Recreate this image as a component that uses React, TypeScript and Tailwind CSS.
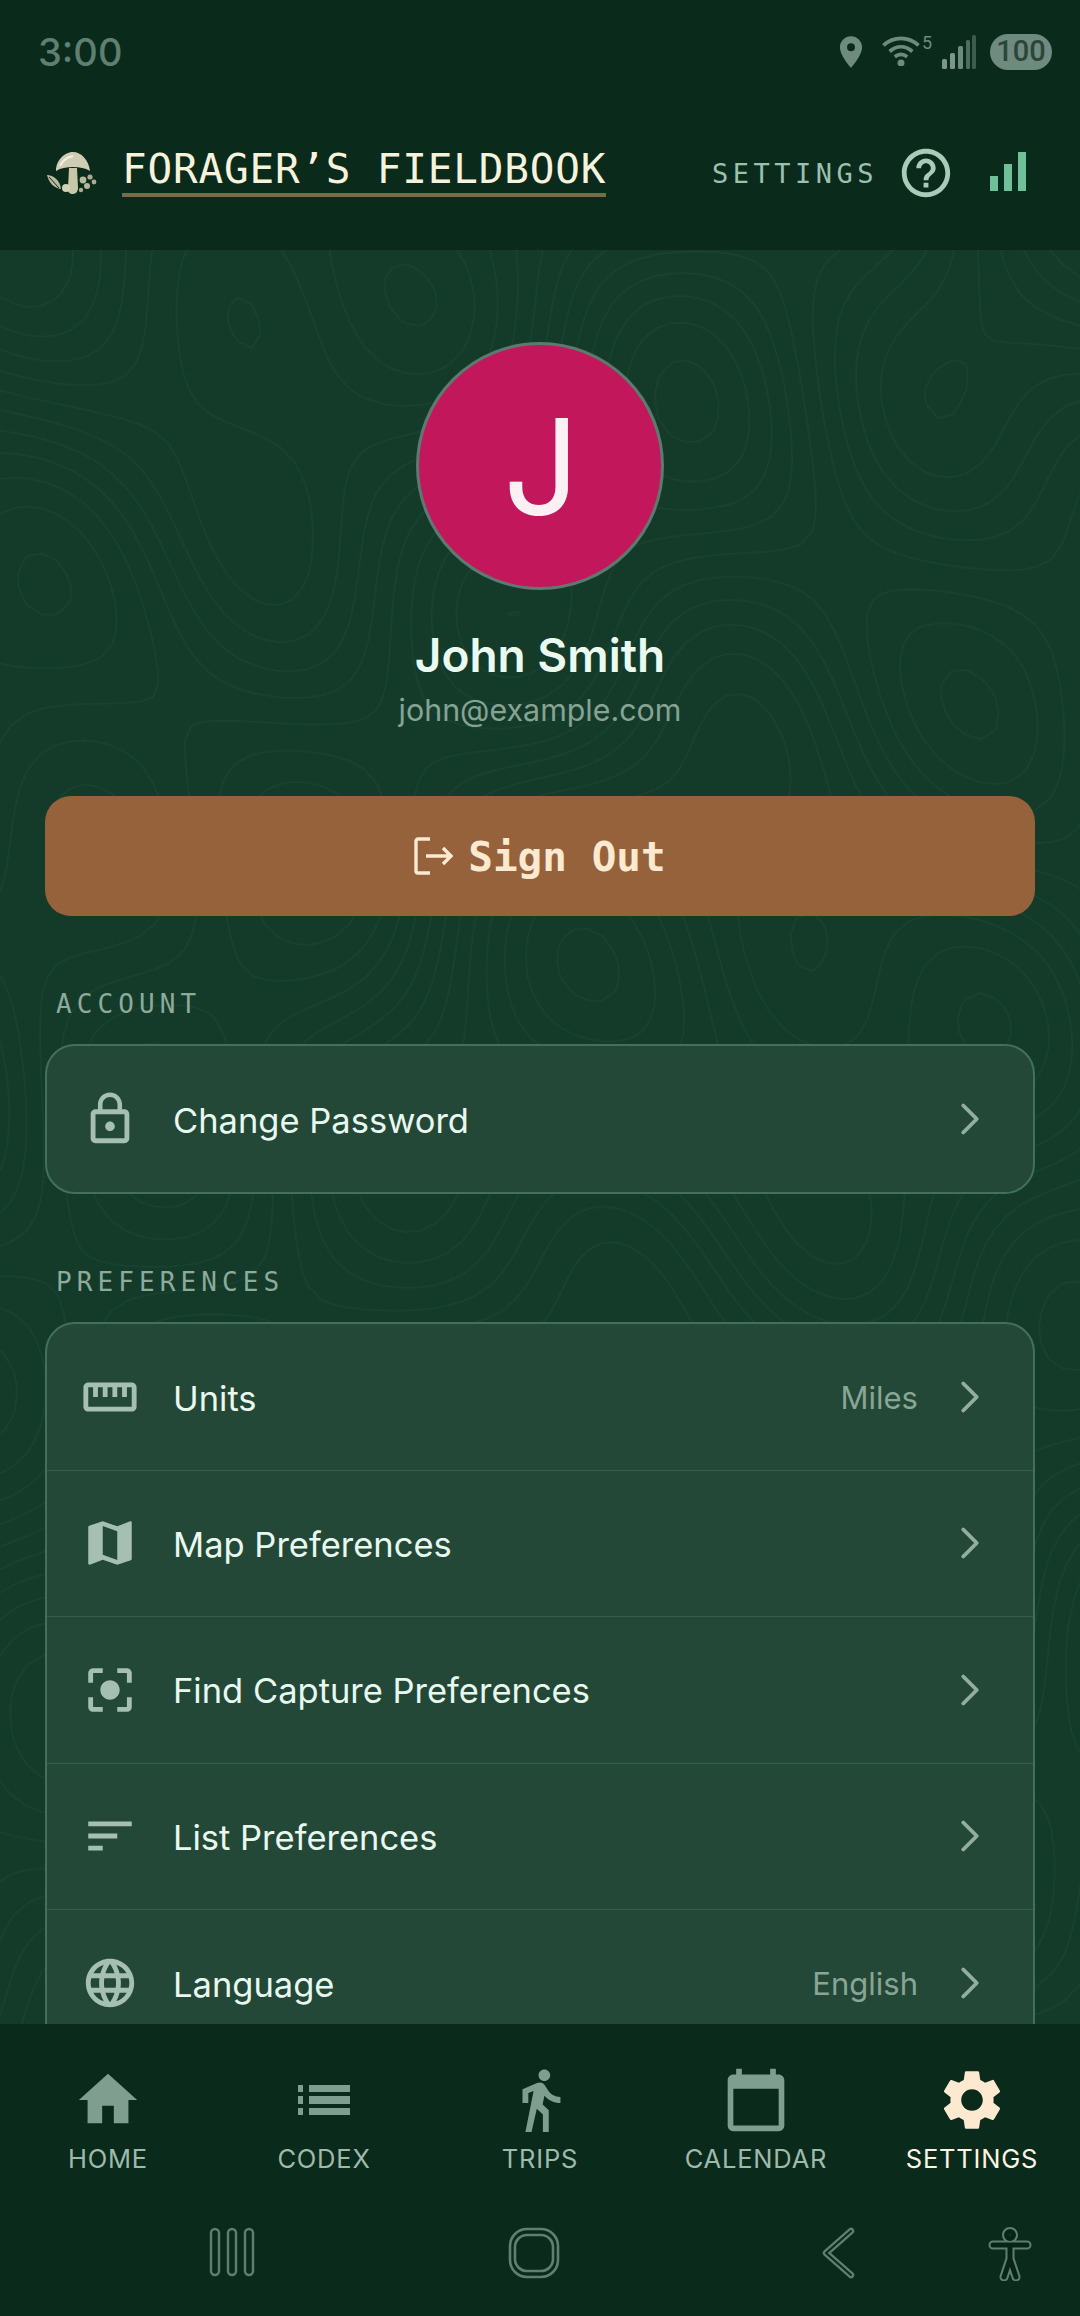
import type { ReactNode } from "react";
import { ChevronRight } from "lucide-react";
import {
  MdCalendarToday,
  MdCenterFocusStrong,
  MdDirectionsWalk,
  MdHelpOutline,
  MdHome,
  MdLanguage,
  MdLocationOn,
  MdLockOutline,
  MdMap,
  MdSettings,
  MdSort,
  MdStraighten,
} from "react-icons/md";

const INTER = "font-['Inter',sans-serif]";
const MONO = "font-['DejaVu_Sans_Mono',monospace]";

// height field for the faint topo lines behind the page
function height(x: number, y: number) {
  return (
    Math.sin(x / 170 + 0.6) * Math.cos(y / 210 - 0.4) +
    0.55 * Math.sin(x / 83 + y / 120 + 1.7) +
    0.35 * Math.cos(x / 61 - y / 74) +
    0.5 * Math.sin(y / 140 + 2.1)
  );
}

// marching squares, one long path per level
function contourPaths(w: number, h: number, cell: number) {
  const out: string[] = [];
  for (let level = -2; level <= 2; level += 0.26) {
    let d = "";
    for (let y = 0; y < h; y += cell) {
      for (let x = 0; x < w; x += cell) {
        const a = height(x, y) - level;
        const b = height(x + cell, y) - level;
        const c = height(x + cell, y + cell) - level;
        const e = height(x, y + cell) - level;
        const pts: string[] = [];
        if (a > 0 !== b > 0) pts.push(`${(x + (cell * a) / (a - b)).toFixed(1)} ${y}`);
        if (b > 0 !== c > 0) pts.push(`${x + cell} ${(y + (cell * b) / (b - c)).toFixed(1)}`);
        if (e > 0 !== c > 0) pts.push(`${(x + (cell * e) / (e - c)).toFixed(1)} ${y + cell}`);
        if (a > 0 !== e > 0) pts.push(`${x} ${(y + (cell * a) / (a - e)).toFixed(1)}`);
        if (pts.length >= 2) d += `M${pts[0]}L${pts[1]}`;
      }
    }
    out.push(d);
  }
  return out;
}

const contours = contourPaths(1080, 1774, 14);

function SectionLabel({ children }: { children: ReactNode }) {
  return (
    <div className={`${MONO} pl-[11px] text-[26px] leading-[32px] tracking-[5.1px] text-[#8daa9b]`}>{children}</div>
  );
}

function Row({ icon, label, value, last }: { icon: ReactNode; label: string; value?: string; last?: boolean }) {
  return (
    <div className={`flex h-[146.4px] shrink-0 items-center ${last ? "" : "border-b border-[#365f4d]"}`}>
      <div className="flex w-[126px] shrink-0 justify-center text-[#a5c0b2]">{icon}</div>
      <span className={`${INTER} flex-1 pt-[3px] text-[34.5px] text-[#e9f8ef]`}>{label}</span>
      {value && <span className={`${INTER} mr-[25px] pt-[3px] text-[31px] text-[#88a596]`}>{value}</span>}
      <ChevronRight size={54} strokeWidth={1.7} className="mr-[36px] text-[#93ae9f]" />
    </div>
  );
}

function NavItem({ icon, label, active }: { icon: ReactNode; label: string; active?: boolean }) {
  return (
    <div className="flex w-[216px] flex-col items-center">
      <div className={`flex h-[72px] items-center justify-center ${active ? "text-[#fde9d0]" : "text-[#7f9e8f]"}`}>
        {icon}
      </div>
      <span
        className={`${INTER} mt-[7px] text-[25.5px] leading-[32px] tracking-[0.8px] ${active ? "text-[#fdf3e3]" : "text-[#9fbaac]"}`}
      >
        {label}
      </span>
    </div>
  );
}

function Mushroom() {
  return (
    <svg width="52" height="46" viewBox="0 0 52 46" className="shrink-0">
      <path d="M10 20C10 8 20 1 27 1c8 0 16 8 17 19-5-3-10-4-17-4s-12 1-17 4z" fill="#cfcdb3" />
      <path d="M14 15c3-6 8-9 13-10" stroke="#f3f1df" strokeWidth="2" fill="none" />
      <path d="M23 17h8l1 20c0 3-2 6-5 6s-6-2-5-6z" fill="#c9c7a8" />
      <path d="M1 24c6 0 13 5 14 14C8 37 3 32 1 24z" fill="#b9baa0" />
      <path d="M3 26l10 11" stroke="#0a2a1c" strokeWidth="1" />
      <circle cx="20" cy="37" r="4" fill="#d3d1b6" />
      <circle cx="37" cy="29" r="3.4" fill="#b6b89a" />
      <circle cx="44" cy="26" r="2.6" fill="#a9ad90" />
      <circle cx="48" cy="31" r="2.4" fill="#a9ad90" />
      <circle cx="41" cy="35" r="3" fill="#b6b89a" />
      <circle cx="35" cy="39" r="2.2" fill="#a9ad90" />
    </svg>
  );
}

function StatusBar() {
  return (
    <div className="flex h-[104px] items-center justify-between pl-[38px] pr-[28px]">
      <span className={`${INTER} text-[38px] font-medium text-[#5f7f70]`}>3:00</span>
      <div className="flex items-center text-[#6f8a7e]">
        <MdLocationOn size={38} />
        <svg width="40" height="31" viewBox="0 0 38 30" className="ml-[11px] -mt-[4px]" fill="none" stroke="currentColor" strokeWidth="3.6">
          <path d="M2 10c10-9 24-9 34 0" />
          <path d="M8 16c7-6 15-6 22 0" />
          <path d="M13 21c4-3 8-3 12 0" />
          <circle cx="19" cy="27" r="1.6" fill="currentColor" />
        </svg>
        <span className="-mt-[18px] ml-[1px] font-['Roboto',sans-serif] text-[18px] leading-[20px]">5</span>
        <svg width="34" height="34" viewBox="0 0 34 34" className="ml-[10px]">
          <rect x="0" y="24" width="5" height="10" rx="1.5" fill="#7c9688" />
          <rect x="8" y="18" width="5" height="16" rx="1.5" fill="#7c9688" />
          <rect x="16" y="11" width="5" height="23" rx="1.5" fill="#6f8a7e" />
          <rect x="24" y="5" width="4" height="29" rx="1.5" fill="#4f6d5f" />
          <rect x="30" y="0" width="4" height="34" rx="1.5" fill="#3d5c4e" />
        </svg>
        <div className="ml-[14px] flex h-[36px] w-[62px] items-center justify-center rounded-[18px] bg-[#6f8a7e] font-['Roboto',sans-serif] text-[29px] font-medium text-[#2c4539]">
          100
        </div>
      </div>
    </div>
  );
}

function Header() {
  return (
    <div className="flex h-[146px] items-start pl-[46px] pr-[54px]">
      <div className="mt-[47px]">
        <Mushroom />
      </div>
      <div className="ml-[24px] mt-[43px] border-b-[4px] border-[#7b6a47] pb-[2px]">
        <div className={`${MONO} text-[41px] leading-[44px] tracking-[0.8px] whitespace-nowrap text-[#f7f2dc]`}>
          FORAGER’S FIELDBOOK
        </div>
      </div>
      <div className="flex-1" />
      <span className={`${MONO} mt-[54px] text-[27px] leading-[32px] tracking-[4.5px] text-[#9cc0ae]`}>SETTINGS</span>
      <MdHelpOutline size={58} className="ml-[19px] mt-[40px] text-[#a9cbb9]" />
      <div className="ml-[35px] mt-[48px] flex h-[39px] items-end gap-[6px]">
        <div className="h-[15px] w-[8px] bg-[#6fbf98]" />
        <div className="h-[27px] w-[8px] bg-[#6fbf98]" />
        <div className="h-[39px] w-[8px] bg-[#6fbf98]" />
      </div>
    </div>
  );
}

export default function App() {
  return (
    <div className="flex h-[2316px] w-[1080px] flex-col overflow-hidden bg-[#0a2a1c]">
      <div className="h-[250px] shrink-0">
        <StatusBar />
        <Header />
      </div>

      <main className="relative flex-1 overflow-hidden bg-[#143b2a]">
        <svg className="absolute inset-0" width="1080" height="1774" fill="none" stroke="#184130" strokeWidth="2">
          {contours.map((d, i) => (
            <path key={i} d={d} />
          ))}
        </svg>

        <div className="relative flex flex-col px-[45px] pt-[92px]">
          <div className="flex h-[248px] w-[248px] items-center justify-center self-center rounded-full border-[3px] border-[#5d7a70] bg-[#c2185b]">
            <span className={`${INTER} pl-[3px] text-[134px] leading-none text-[#fdf0f4]`}>J</span>
          </div>
          <div className={`${INTER} mt-[38px] text-center text-[46px] leading-[54px] font-semibold text-[#ebfaf1]`}>
            John Smith
          </div>
          <div className={`${INTER} mt-[8px] text-center text-[30.4px] leading-[40px] text-[#86a394]`}>
            john@example.com
          </div>

          <div className="mt-[66px] flex h-[120px] items-center justify-center rounded-[26px] bg-[#96623c]">
            <svg width="40" height="38" viewBox="0 0 40 38" fill="none" stroke="#fde9d0" strokeWidth="3.4">
              <path d="M16 2H4a2 2 0 0 0-2 2v30a2 2 0 0 0 2 2h12" />
              <path d="M12 19h25M29 11l8 8-8 8" />
            </svg>
            <span className={`${MONO} ml-[14px] pt-[3px] text-[41px] font-bold text-[#fde9d0]`}>Sign Out</span>
          </div>

          <div className="mt-[72px]">
            <SectionLabel>ACCOUNT</SectionLabel>
          </div>
          <div className="mt-[24px] overflow-hidden rounded-[30px] border-2 border-[#44705b] bg-[#234838]">
            <Row icon={<MdLockOutline size={58} />} label="Change Password" last />
          </div>

          <div className="mt-[72px]">
            <SectionLabel>PREFERENCES</SectionLabel>
          </div>
          <div className="mt-[24px] overflow-hidden rounded-[30px] border-2 border-[#44705b] bg-[#234838]">
            <Row icon={<MdStraighten size={58} />} label="Units" value="Miles" />
            <Row icon={<MdMap size={58} />} label="Map Preferences" />
            <Row icon={<MdCenterFocusStrong size={58} />} label="Find Capture Preferences" />
            <Row icon={<MdSort size={58} />} label="List Preferences" />
            <Row icon={<MdLanguage size={58} />} label="Language" value="English" last />
          </div>
        </div>
      </main>

      <div className="h-[292px] shrink-0">
        <div className="flex pt-[40px]">
          <NavItem icon={<MdHome size={70} />} label="HOME" />
          <NavItem
            icon={
              <svg width="52" height="30" viewBox="0 0 52 30" fill="currentColor">
                <rect x="0" y="0" width="5" height="7" />
                <rect x="11" y="0" width="41" height="7" />
                <rect x="0" y="11" width="5" height="8" />
                <rect x="11" y="11" width="41" height="8" />
                <rect x="0" y="23" width="5" height="7" />
                <rect x="11" y="23" width="41" height="7" />
              </svg>
            }
            label="CODEX"
          />
          <NavItem icon={<MdDirectionsWalk size={70} />} label="TRIPS" />
          <NavItem icon={<MdCalendarToday size={68} />} label="CALENDAR" />
          <NavItem icon={<MdSettings size={72} />} label="SETTINGS" active />
        </div>

        <div className="mt-[52px] flex items-start pl-[209px]">
          <svg width="46" height="50" viewBox="0 0 46 50" fill="none" stroke="#5f8070" strokeWidth="2.4">
            <rect x="2" y="2" width="8" height="46" rx="4" />
            <rect x="19" y="2" width="8" height="46" rx="4" />
            <rect x="36" y="2" width="8" height="46" rx="4" />
          </svg>
          <svg width="52" height="52" viewBox="0 0 52 52" fill="none" className="ml-[253px]">
            <rect x="2" y="2" width="48" height="48" rx="17" stroke="#5f8070" strokeWidth="2.6" />
            <rect x="7" y="8" width="38" height="36" rx="12" stroke="#5f8070" strokeWidth="2.6" />
          </svg>
          <svg width="34" height="52" viewBox="0 0 34 52" fill="none" strokeLinecap="round" strokeLinejoin="round" className="ml-[261px]">
            <path d="M30 4 5 26l25 22" stroke="#5f8070" strokeWidth="6.5" />
            <path d="M30 4 5 26l25 22" stroke="#0a2a1c" strokeWidth="2" />
          </svg>
          <svg width="44" height="54" viewBox="0 0 44 54" fill="none" strokeLinecap="round" strokeLinejoin="round" className="ml-[133px]">
            <g stroke="#5f8070" strokeWidth="9">
              <circle cx="22" cy="8" r="3.5" />
              <path d="M5 18h34M22 18v14M22 32l-6 18M22 32l6 18" />
            </g>
            <g stroke="#082318" strokeWidth="5">
              <circle cx="22" cy="8" r="3.5" />
              <path d="M5 18h34M22 18v14M22 32l-6 18M22 32l6 18" />
            </g>
          </svg>
        </div>
      </div>
    </div>
  );
}
